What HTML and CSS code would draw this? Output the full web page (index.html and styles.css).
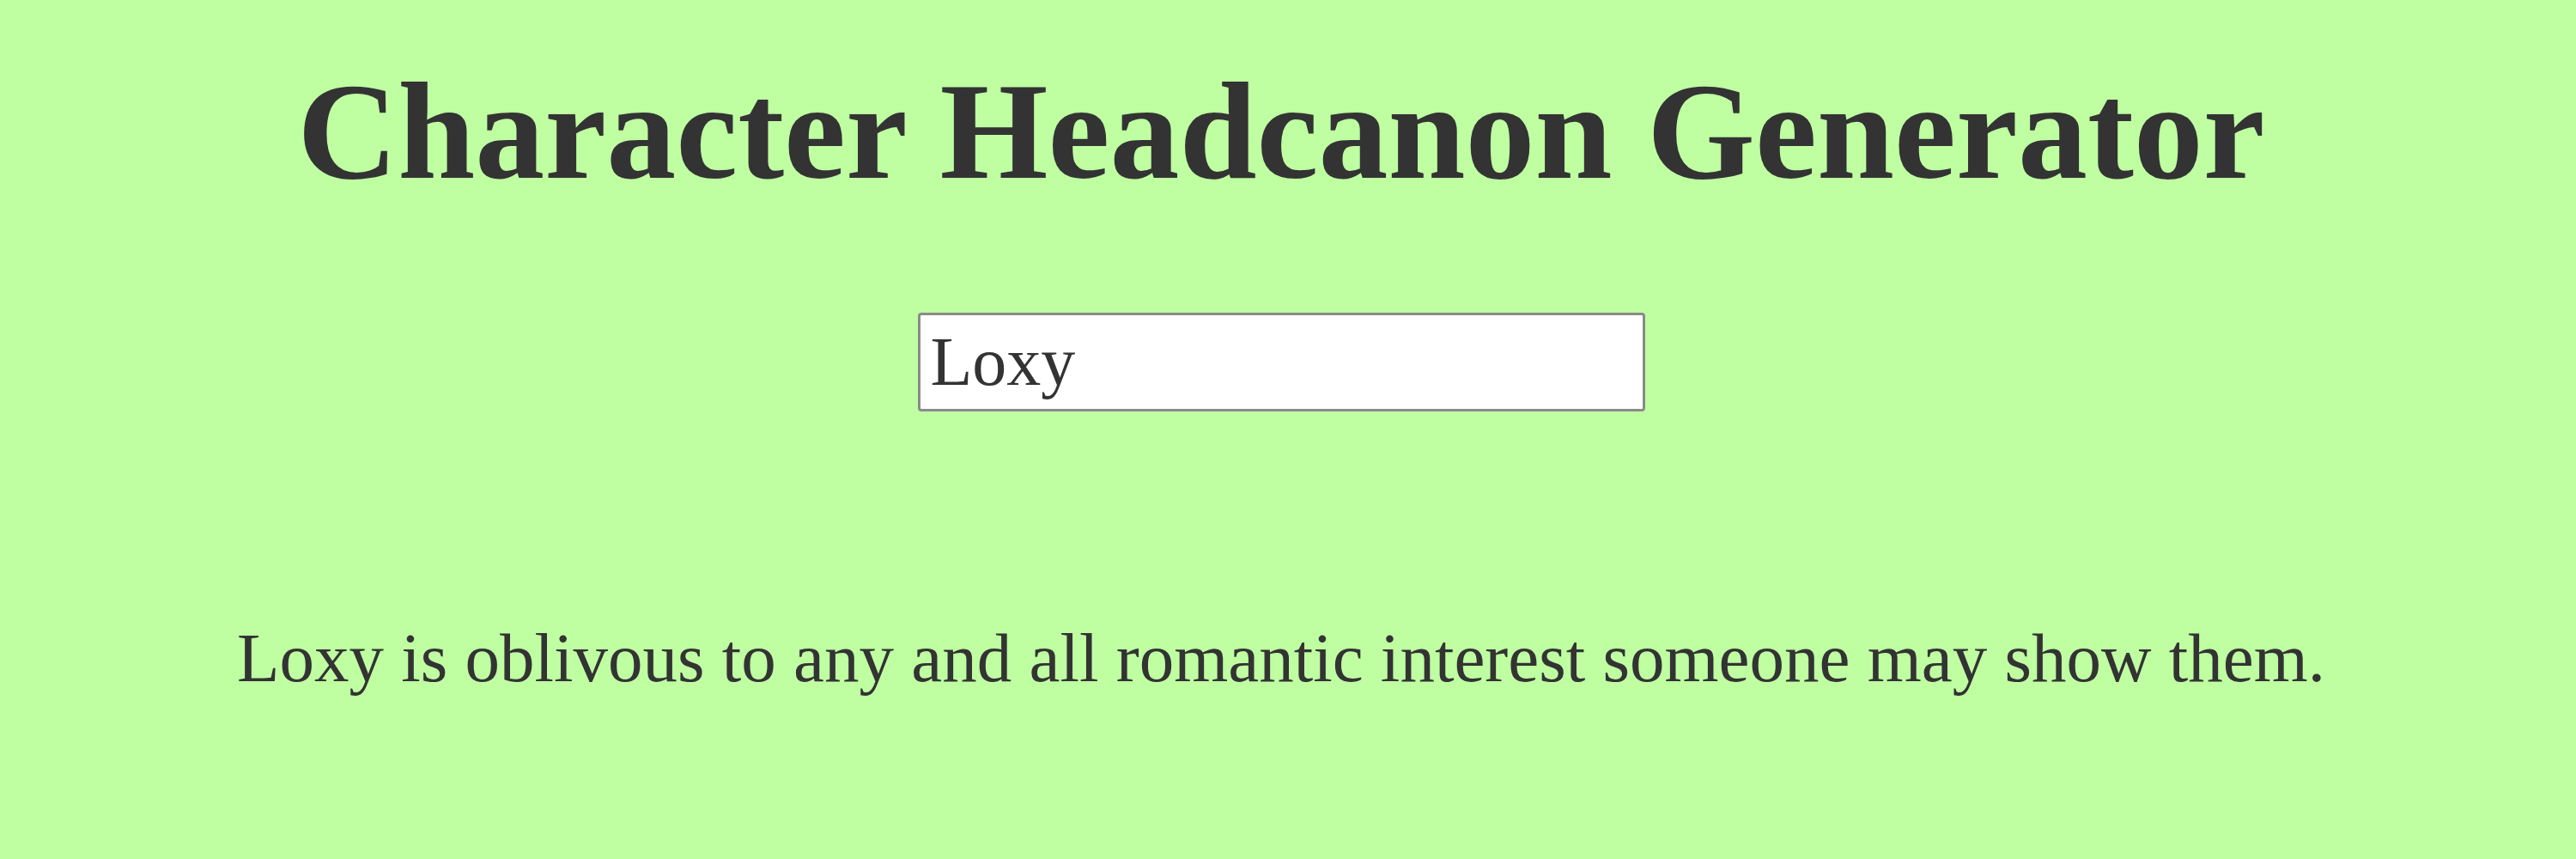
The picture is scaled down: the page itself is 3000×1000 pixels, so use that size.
FILE: index.html
```html
<!DOCTYPE html>
<html>
<head>
<meta charset="utf-8">
<link rel="stylesheet" href="styles.css">
</head>
<body>
<main class="page">
  <h1 class="title">Character Headcanon Generator</h1>
  <input class="name-input" type="text" value="Loxy">
  <p class="result">Loxy is oblivous to any and all romantic interest someone may show them.</p>
</main>
</body>
</html>
```
FILE: styles.css
```css
html, body {
  margin: 0;
  padding: 0;
  background: #bfffa2;
  height: 100%;
}
.page {
  display: flex;
  flex-direction: column;
  align-items: center;
  padding-right: 16px;
  font-family: "Liberation Serif", "Times New Roman", serif;
  color: #333333;
}
.title {
  margin: 60px 0 0 0;
  font-size: 162px;
  font-weight: bold;
  line-height: 1.15;
}
.name-input {
  margin-top: 118px;
  box-sizing: border-box;
  width: 847px;
  height: 115px;
  font-family: "Liberation Serif", "Times New Roman", serif;
  font-size: 80px;
  color: #333333;
  padding: 0 12px;
  border: 3px solid #8a8a8a;
  border-radius: 4px;
  background: #ffffff;
}
.result {
  margin: 241px 0 0 0;
  font-size: 81px;
  line-height: 1.15;
}
```
